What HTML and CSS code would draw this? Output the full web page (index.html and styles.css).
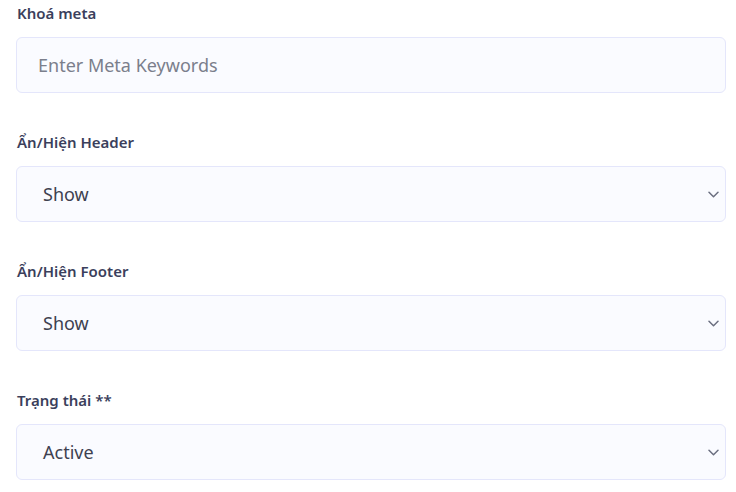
FILE: index.html
```html
<!DOCTYPE html>
<html lang="vi">
<head>
<meta charset="utf-8">
<link rel="stylesheet" href="styles.css">
</head>
<body>
<form class="form">
  <div class="group">
    <label class="label">Khoá meta</label>
    <div class="field"><span class="placeholder">Enter Meta Keywords</span></div>
  </div>
  <div class="group">
    <label class="label">Ẩn/Hiện Header</label>
    <div class="field select"><span class="value">Show</span>
      <svg class="chev" viewBox="0 0 11 7" width="11" height="7"><path d="M1 1.2l4.5 4.5 4.5-4.5" fill="none" stroke="#6b6f80" stroke-width="1.5" stroke-linecap="round" stroke-linejoin="round"/></svg>
    </div>
  </div>
  <div class="group">
    <label class="label">Ẩn/Hiện Footer</label>
    <div class="field select"><span class="value">Show</span>
      <svg class="chev" viewBox="0 0 11 7" width="11" height="7"><path d="M1 1.2l4.5 4.5 4.5-4.5" fill="none" stroke="#6b6f80" stroke-width="1.5" stroke-linecap="round" stroke-linejoin="round"/></svg>
    </div>
  </div>
  <div class="group">
    <label class="label">Trạng thái **</label>
    <div class="field select"><span class="value">Active</span>
      <svg class="chev" viewBox="0 0 11 7" width="11" height="7"><path d="M1 1.2l4.5 4.5 4.5-4.5" fill="none" stroke="#6b6f80" stroke-width="1.5" stroke-linecap="round" stroke-linejoin="round"/></svg>
    </div>
  </div>
</form>
</body>
</html>
```
FILE: styles.css
```css
html, body {
  margin: 0;
  padding: 0;
  background: #ffffff;
}
body {
  font-family: "Noto Sans", "Open Sans", sans-serif;
}
.form {
  padding: 4px 10px 0 16px;
  display: flex;
  flex-direction: column;
  gap: 40px;
}
.group {
  display: flex;
  flex-direction: column;
  gap: 15px;
}
.label {
  display: block;
  font-size: 15px;
  line-height: 18px;
  font-weight: 600;
  color: #3b3f5c;
  padding-left: 1px;
}
.field {
  height: 56px;
  box-sizing: border-box;
  border: 1px solid #e4e6fb;
  border-radius: 6px;
  background: #fafbff;
  display: flex;
  align-items: center;
  padding: 0 6px 0 21px;
  font-size: 18px;
}
.placeholder {
  color: #7b7f8c;
}
.select {
  justify-content: space-between;
  padding-left: 26px;
}
.value {
  color: #3e4150;
}
.chev {
  display: block;
}
```
